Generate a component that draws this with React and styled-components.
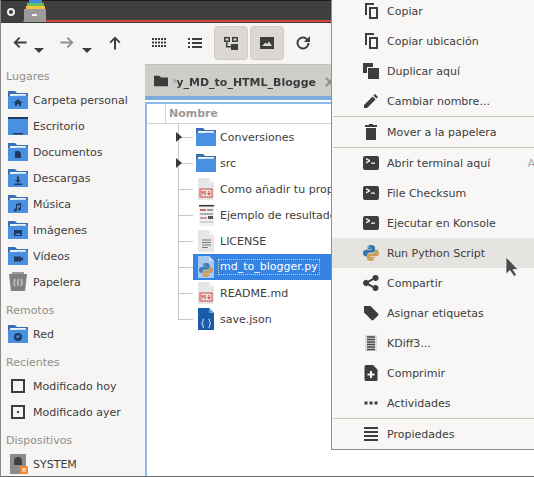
import React from "react";
import styled, { createGlobalStyle } from "styled-components";

const Global = createGlobalStyle`
  html, body { margin: 0; padding: 0; background: #fff; }
  body { font-family: "DejaVu Sans", sans-serif; font-size: 11px; color: #3d3d3d; }
`;

const Page = styled.div`
  position: relative;
  width: 534px;
  height: 477px;
  overflow: hidden;
  display: flex;
  flex-direction: column;
  background: #f6f5f3;
  box-sizing: border-box;
  border-left: 1px solid #8b8b8b;
  border-bottom: 1px solid #6b6b6b;
`;

const TitleBar = styled.div`
  height: 23px;
  flex: none;
  box-sizing: border-box;
  background: #3f3f3f;
  border-top: 1px solid #1c1c1c;
  border-bottom: 1px solid #3a3a3a;
  display: flex;
  align-items: flex-start;
  position: relative;
  padding-left: 5px;
  gap: 7px;
`;
const RedLine = styled.div`
  position: absolute;
  left: 22px;
  right: 0;
  bottom: 0;
  height: 2px;
  background: #d2453a;
`;
const AppIcon = styled.svg`
  position: relative;
  z-index: 1;
  margin-top: -1px;
`;
const Gear = styled.svg`
  margin-top: 6px;
`;

const Toolbar = styled.div`
  height: 41px;
  flex: none;
  display: flex;
  align-items: center;
  box-sizing: border-box;
  padding: 1px 0 2px;
`;
const ToolBtn = styled.div`
  width: 34px;
  height: 34px;
  margin-left: ${(p) => p.$ml || 0}px;
  flex: none;
  box-sizing: border-box;
  display: flex;
  align-items: center;
  justify-content: center;
  border-radius: 4px;
  position: relative;
  background: ${(p) => (p.$on ? "#dbd8d2" : "transparent")};
  border: 1px solid ${(p) => (p.$on ? "#cfccc6" : "transparent")};
`;
const DropTip = styled.span`
  position: absolute;
  left: ${(p) => p.$x}px;
  top: 21px;
  width: 0;
  height: 0;
  border-left: 5px solid transparent;
  border-right: 5px solid transparent;
  border-top: 5px solid #3d3d3d;
`;

const Body = styled.div`
  flex: 1;
  min-height: 0;
  display: flex;
`;
const Sidebar = styled.div`
  width: 144px;
  flex: none;
  padding-top: 1px;
  box-sizing: border-box;
`;
const SideLabel = styled.div`
  height: 22px;
  line-height: 24px;
  margin-top: ${(p) => (p.$first ? 0 : 4)}px;
  padding-left: 5px;
  color: #8f8f8d;
`;
const SideRow = styled.div`
  height: 26px;
  display: flex;
  align-items: center;
  padding-left: 7px;
  gap: 5px;
  white-space: nowrap;
  color: #3d3d3d;
`;

const Main = styled.div`
  flex: 1;
  min-width: 0;
  display: flex;
  flex-direction: column;
`;
const TabBar = styled.div`
  height: 32px;
  flex: none;
  box-sizing: border-box;
  background: #cfcdc9;
  border-top: 1px solid #c4c1bb;
  display: flex;
  align-items: center;
  padding-left: 9px;
  gap: 5px;
`;
const TabText = styled.div`
  width: 143px;
  padding-top: 3px;
  overflow: hidden;
  display: flex;
  justify-content: flex-end;
  white-space: nowrap;
  font-weight: bold;
  color: #3b3b3b;
  -webkit-mask-image: linear-gradient(90deg, transparent 0, #000 5px);
  mask-image: linear-gradient(90deg, transparent 0, #000 5px);
`;
const TabClose = styled.svg`
  margin-left: 4px;
  margin-top: 3px;
  flex: none;
`;
const ViewFrame = styled.div`
  flex: 1;
  min-height: 0;
  background: #fff;
  border-top: 4px solid #7ea9dc;
  display: flex;
  flex-direction: column;
`;
const ListFrame = styled.div`
  flex: 1;
  box-sizing: border-box;
  border-left: 2px solid #8cbbeb;
  border-top: 2px solid #8cbbeb;
  margin-top: 2px;
  background: #fff;
`;
const HeaderRow = styled.div`
  height: 20px;
  box-sizing: border-box;
  border-bottom: 1px solid #d5d3cf;
  display: flex;
  align-items: center;
`;
const HeaderCell = styled.div`
  width: 18px;
  height: 100%;
  border-right: 1px solid #d5d3cf;
`;
const HeaderName = styled.div`
  padding-left: 3px;
  font-weight: bold;
  color: #9a9a98;
`;
const TreeRow = styled.div`
  height: 26px;
  display: flex;
  padding-left: 31px;
`;
const Guide = styled.div`
  position: relative;
  width: 14px;
  flex: none;
  height: ${(p) => (p.$last ? "14px" : "100%")};
  border-left: 1px solid #c9c7c3;
  box-sizing: content-box;
  &::after {
    content: "";
    position: absolute;
    left: 0;
    right: 0;
    top: 13px;
    height: 1px;
    background: #c9c7c3;
  }
`;
const Expander = styled.span`
  position: absolute;
  z-index: 1;
  left: -3px;
  top: 8px;
  width: 0;
  height: 0;
  border-top: 5px solid transparent;
  border-bottom: 5px solid transparent;
  border-left: 6px solid #3a3a3a;
`;
const TreeItem = styled.div`
  flex: 1;
  display: flex;
  align-items: center;
  padding-left: 3px;
  gap: 4px;
  white-space: nowrap;
  overflow: hidden;
  background: ${(p) => (p.$sel ? "#3584e4" : "transparent")};
  color: ${(p) => (p.$sel ? "#fff" : "#3d3d3d")};
`;
const EditName = styled.span`
  outline: 1px dotted #d9cfa8;
  outline-offset: 0;
  padding: 0 1px;
  margin-left: -1px;
  line-height: 14px;
`;

const Menu = styled.div`
  position: absolute;
  left: 330px;
  top: -1px;
  width: 204px;
  height: 451px;
  box-sizing: border-box;
  background: #f8f7f5;
  border: 1px solid #8f8f8f;
  border-right: none;
  overflow: hidden;
`;
const MenuList = styled.div`
  margin-top: -4px;
`;
const MenuRow = styled.div`
  height: 30px;
  display: flex;
  align-items: center;
  padding-left: 1px;
  white-space: nowrap;
  position: relative;
  color: #3d3d3d;
  background: ${(p) => (p.$hover ? "#e6e4e0" : "transparent")};
`;
const MenuIcon = styled.div`
  width: 54px;
  flex: none;
  display: flex;
  justify-content: center;
  padding-left: 22px;
  box-sizing: border-box;
  align-items: center;
`;
const Shortcut = styled.span`
  position: absolute;
  right: 0;
  color: #a9a8a5;
`;
const MenuSep = styled.div`
  height: 1px;
  margin-left: 1px;
  background: #c9c6c0;
`;
const Pointer = styled.svg`
  position: absolute;
  left: 503px;
  top: 256px;
`;

const Ico = ({ d, size = 16, fill = "#3d3d3d", children }) => (
  <svg width={size} height={size} viewBox="0 0 16 16" fill={fill}>
    {d && <path d={d} />}
    {children}
  </svg>
);

const ICONS = {
  back: "M7 2 1.500 7.500 7 13l1.300-1.300L5 8.500h9.500v-2H5l3.300-3.200z",
  fwd: "M9 2l5.500 5.500L9 13l-1.300-1.300L11 8.500H1.500v-2H11L7.700 3.300z",
  up: "M8 1.500 2.500 7 3.800 8.300 7 5v9.500h2V5l3.200 3.300L13.500 7z",
  list: "M1 3h2v2H1zM5 3h10v2H5zM1 7h2v2H1zM5 7h10v2H5zM1 11h2v2H1zM5 11h10v2H5z",
  tree: "M1 2h6v5H1zm1.500 1.500V5.500h3V3.500zM9 2h6v5H9zm1.500 1.500V5.500h3V3.500zM3 7h1.500v4H8v1.500H3zM8 9h7v6H8z",
  image: "M1 2h14v12H1zM3 11h10L10 6.500 8 9 6.500 7.500z",
  reload: "M8 1.500a6.500 6.500 0 1 0 6.500 6.500h-2A4.500 4.500 0 1 1 8 3.500c1.200 0 2.300.5 3.100 1.300L8.900 7H15V1l-2.400 2.400A6.500 6.500 0 0 0 8 1.500z",
  copy: "M2 0h9v2H4v10H2zM6 4h9v12H6zm2 2v8h5V6z",
  dup: "M0 0h10v4H4v6H0zM5 5h11v11H5z",
  pen: "M12 1l3 3-1.600 1.600-3-3zM9.600 3.400l3 3L4 15H1v-3z",
  trash: "M6 0h4v1h4v2H2V1h4zM3 4h10v12H3z",
  term: "M2 1h12a2 2 0 0 1 2 2v10a2 2 0 0 1-2 2H2a2 2 0 0 1-2-2V3a2 2 0 0 1 2-2zm1 2V4.500l2.500 1.200L3 7v1.500l4-2.100v-1.400zM8 7.500v1.200h4V7.500z",
  share: "M12.500 0a3 3 0 1 1-2.200 5L6 7.400v1.200L10.300 11a3 3 0 1 1-.8 1.800L5 10.300a3 3 0 1 1 0-4.600l4.500-2.500A3 3 0 0 1 12.500 0z",
  tag: "M1 1h6.500L15 8.500a1.500 1.500 0 0 1 0 2L10.500 15a1.500 1.500 0 0 1-2 0L1 7.500z",
  compress: "M3 0h7l4.500 4.500V14.500a1.500 1.500 0 0 1-1.500 1.500H3a1.500 1.500 0 0 1-1.500-1.500V1.500A1.500 1.500 0 0 1 3 0zM7 6v2.500H4.500v2H7V13h2v-2.500h2.500v-2H9V6z",
  dots: "M1.500 6.500h3v3h-3zM6.500 6.500h3v3h-3zM11.500 6.500h3v3h-3z",
  props: "M1 1h14v2H1zM1 5h14v2H1zM1 9h14v2H1zM1 13h14v2H1z",
};

const Grid = () => (
  <Ico>
    {[2, 5, 8, 11, 14].flatMap((x) =>
      [3, 6.5, 10].map((y) => <rect key={x + "-" + y} x={x - 1} y={y} width="2" height="2" />)
    )}
  </Ico>
);

const Folder = ({ glyph, desk }) => (
  <svg width="20" height="20" viewBox="0 0 20 20">
    {desk ? (
      <>
        <rect y="1" width="20" height="18" fill="#4a90e2" />
        <rect y="1" width="20" height="2" fill="#1f3b5f" />
        <rect x="5" y="17" width="10" height="1.500" fill="#1f3b5f" />
      </>
    ) : (
      <>
        <path d="M0 1h7l2 2h11v4H0z" fill="#3b6fb3" />
        <rect x="2" y="4.500" width="16" height="2" fill="#e8eef5" />
        <path d="M0 6h8l1-.5h11V19H0z" fill="#4a90e2" />
        <rect x="2" y="4" width="16" height="1.500" fill="#eef2f6" />
      </>
    )}
    {glyph === "home" && <path d="M10 9l-4.500 4H7v3h2v-2h2v2h2v-3h1.500z" fill="#1f3b5f" />}
    {glyph === "doc" && <path d="M7 9h4l2 2v5H7z" fill="#1f3b5f" />}
    {glyph === "down" && <path d="M9 8.500h2V12h2l-3 3-3-3h2zM6 15.500h8V17H6z" fill="#1f3b5f" />}
    {glyph === "music" && <path d="M8 10l5-1v6a1.500 1.500 0 1 1-1-1.400V11l-3 .6V16a1.500 1.500 0 1 1-1-1.400z" fill="#1f3b5f" />}
    {glyph === "img" && <path d="M6 10h8v6H6zM7 15h6l-2-2-1.500 1-1-.8z" fill="#1f3b5f" fillRule="evenodd" />}
    {glyph === "video" && <path d="M6 10.500h7v5H6zM13 12l2-1v4l-2-1z" fill="#1f3b5f" />}
    {glyph === "net" && (
      <>
        <circle cx="10" cy="13" r="4" fill="#1f3b5f" />
        <path d="M8 11l2 1 1-1.500 1 2-2 1-1 1.500z" fill="#4a90e2" />
      </>
    )}
  </svg>
);

const Trash = () => (
  <svg width="20" height="20" viewBox="0 0 20 20">
    <path d="M4 0h12v2H4z" fill="#9a9a98" />
    <path d="M1 2h18l-2 17H3z" fill="#7f7f7d" />
    <path d="M7 7c-1 2-1 5 0 7M13 7c1 2 1 5 0 7M10 7v7" stroke="#b5b5b3" strokeWidth="2" fill="none" />
  </svg>
);

const RecentIcon = ({ dot }) => (
  <svg width="20" height="20" viewBox="0 0 20 20">
    <rect x="4" y="4" width="12" height="12" fill="none" stroke="#3d3d3d" strokeWidth="2" />
    {dot && <rect x="9" y="9" width="2" height="2" fill="#3d3d3d" />}
  </svg>
);

const Drive = () => (
  <svg width="20" height="20" viewBox="0 0 20 20">
    <rect x="2" y="0" width="16" height="20" fill="#8c8c8a" />
    <path d="M6 12V7a4 4 0 0 1 8 0v4H6z" fill="#3f3f3f" />
    <rect x="12" y="12" width="8" height="8" rx="1" fill="#f08a3c" />
    <path d="M14.500 14.500l3 3M17.500 14.500l-3 3" stroke="#fff" strokeWidth="1.200" />
  </svg>
);

const PythonLogo = ({ size = 16, dim }) => (
  <svg width={size} height={size} viewBox="0 0 16 16">
    <path d="M8 0C5 0 4.500 1 4.500 2.500V4H8.500v.7H3C1 4.700 0 6 0 8s1 3.500 3 3.500h1.200V9.800C4.200 8.500 5.300 7.500 6.500 7.500h3.500c1 0 2-.9 2-2V2.500C12 1 10.500 0 8 0zM6 1.300a.7.7 0 1 1 0 1.400.7.7 0 0 1 0-1.400z" fill={dim ? "#3f7db5" : "#3776ab"} />
    <path d="M8 16c3 0 3.500-1 3.500-2.500V12H7.500v-.7H13c2 0 3-1.300 3-3.300s-1-3.500-3-3.500h-1.200v1.700c0 1.300-1.100 2.300-2.300 2.300H6c-1 0-2 .9-2 2v3c0 1.500 1.500 2.500 4 2.500zm2-1.300a.7.7 0 1 1 0-1.400.7.7 0 0 1 0 1.400z" fill="#c9a15a" />
  </svg>
);

const FilePage = ({ bg = "#e6e6e4", fold = "#f4f4f2", children }) => (
  <svg width="20" height="22" viewBox="0 0 20 22">
    <path d="M2 0h11l5 5v17H2z" fill={bg} />
    <path d="M13 0l5 5h-5z" fill={fold} />
    {children}
  </svg>
);

const MdMark = () => (
  <>
    <rect x="4" y="11" width="12" height="8" fill="none" stroke="#d9423c" strokeWidth="1" />
    <path d="M6 17v-4l1.500 2L9 13v4M13 13v3M11.500 15l1.500 2 1.500-2" fill="none" stroke="#d9423c" strokeWidth="1" />
  </>
);

const FileIcon = ({ kind }) => {
  if (kind === "folder") return <Folder />;
  if (kind === "md") return <FilePage><MdMark /></FilePage>;
  if (kind === "shot")
    return (
      <svg width="20" height="22" viewBox="0 0 20 22">
        <rect x="3" y="0" width="15" height="22" fill="#f3f3f3" />
        <rect x="3" y="1" width="15" height="1.500" fill="#2b3a4a" />
        <rect x="4" y="5" width="6" height="2" fill="#c96a62" />
        <rect x="11" y="5" width="6" height="2" fill="#9a9a9a" />
        <rect x="4" y="9" width="13" height="2" fill="#b0b0b0" />
        <rect x="4" y="13" width="7" height="2" fill="#c9a0a0" />
        <rect x="12" y="12" width="5" height="3" fill="#555" />
        <rect x="4" y="17" width="13" height="2" fill="#d0d0d0" />
      </svg>
    );
  if (kind === "text")
    return (
      <FilePage>
        <path d="M6 10h9M6 12.500h9M6 15h9M6 17.500h6" stroke="#777" strokeWidth="1" />
      </FilePage>
    );
  if (kind === "py")
    return (
      <svg width="20" height="22" viewBox="0 0 20 22">
        <path d="M2 0h11l5 5v17H2z" fill="#a8c8ee" />
        <path d="M13 0l5 5h-5z" fill="#cfe0f5" />
        <g transform="translate(3 7)"><PythonLogo size={14} dim /></g>
      </svg>
    );
  return (
    <svg width="20" height="22" viewBox="0 0 20 22">
      <path d="M2 0h11l5 5v17H2z" fill="#1c5ba8" />
      <path d="M13 0l5 5h-5z" fill="#6a9fdc" />
      <path d="M8 11c-1.500 0-1 1.500-1 2.500S6.500 15 5.500 15.500c1 .5 1.500.5 1.500 1.500s-.5 2.500 1 2.500M12.500 11c1.500 0 1 1.500 1 2.500s.5 1.500 1.500 2c-1 .5-1.500.5-1.500 1.500s.5 2.500-1 2.500" fill="none" stroke="#fff" strokeWidth=".9" />
    </svg>
  );
};

const places = [
  ["Carpeta personal", <Folder glyph="home" />],
  ["Escritorio", <Folder desk />],
  ["Documentos", <Folder glyph="doc" />],
  ["Descargas", <Folder glyph="down" />],
  ["Música", <Folder glyph="music" />],
  ["Imágenes", <Folder glyph="img" />],
  ["Vídeos", <Folder glyph="video" />],
  ["Papelera", <Trash />],
];

const files = [
  { name: "Conversiones", kind: "folder", open: true },
  { name: "src", kind: "folder", open: true },
  { name: "Como añadir tu propio", kind: "md" },
  { name: "Ejemplo de resultado.html", kind: "shot" },
  { name: "LICENSE", kind: "text" },
  { name: "md_to_blogger.py", kind: "py", sel: true },
  { name: "README.md", kind: "md" },
  { name: "save.json", kind: "json", last: true },
];

const menuTop = [
  ["Copiar", "copy"],
  ["Copiar ubicación", "copy"],
  ["Duplicar aquí", "dup"],
  ["Cambiar nombre...", "pen"],
];
const menuMid = [
  ["File Checksum", "term"],
  ["Ejecutar en Konsole", "term"],
];
const menuLow = [
  ["Compartir", "share"],
  ["Asignar etiquetas", "tag"],
];

function MenuItem({ label, icon, hover, shortcut, children }) {
  return (
    <MenuRow $hover={hover}>
      <MenuIcon>{children || <Ico d={ICONS[icon]} />}</MenuIcon>
      {label}
      {shortcut && <Shortcut>{shortcut}</Shortcut>}
    </MenuRow>
  );
}

export default function App() {
  return (
    <Page>
      <Global />
      <TitleBar>
        <Gear width="10" height="10" viewBox="0 0 10 10">
          <circle cx="5" cy="5" r="3" fill="none" stroke="#eee" strokeWidth="2" />
        </Gear>
        <AppIcon width="24" height="22" viewBox="0 0 24 22">
          <rect x="6" y="0" width="13" height="3" fill="#3f8ae0" />
          <rect x="4" y="3" width="17" height="3" fill="#5fc15f" />
          <rect x="3" y="6" width="19" height="3" fill="#f5c242" />
          <rect x="1" y="9" width="22" height="13" fill="#9b9b99" />
          <rect x="9" y="14" width="5" height="2" fill="#f4f4f4" />
        </AppIcon>
        <RedLine />
      </TitleBar>
      <Toolbar>
        <ToolBtn $ml={2}><Ico d={ICONS.back} /><DropTip $x={30} /></ToolBtn>
        <ToolBtn $ml={13}><Ico d={ICONS.fwd} fill="#8f8f8d" /><DropTip $x={31} /></ToolBtn>
        <ToolBtn $ml={14}><Ico d={ICONS.up} /></ToolBtn>
        <ToolBtn $ml={10}><Grid /></ToolBtn>
        <ToolBtn $ml={2}><Ico d={ICONS.list} /></ToolBtn>
        <ToolBtn $on $ml={2}><Ico d={ICONS.tree} /></ToolBtn>
        <ToolBtn $on $ml={2}><Ico d={ICONS.image} /></ToolBtn>
        <ToolBtn $ml={2}><Ico d={ICONS.reload} /></ToolBtn>
      </Toolbar>
      <Body>
        <Sidebar>
          <SideLabel $first>Lugares</SideLabel>
          {places.map(([name, icon]) => (
            <SideRow key={name}>{icon}{name}</SideRow>
          ))}
          <SideLabel>Remotos</SideLabel>
          <SideRow><Folder glyph="net" />Red</SideRow>
          <SideLabel>Recientes</SideLabel>
          <SideRow><RecentIcon />Modificado hoy</SideRow>
          <SideRow><RecentIcon dot />Modificado ayer</SideRow>
          <SideLabel>Dispositivos</SideLabel>
          <SideRow><Drive />SYSTEM</SideRow>
        </Sidebar>
        <Main>
          <TabBar>
            <Ico size={14} d="M0 2h6l2 2h8v10H0z" fill="#3b3b3b" />
            <TabText>Py_MD_to_HTML_Blogge</TabText>
            <TabClose width="10" height="10" viewBox="0 0 10 10">
              <path d="M1 1l8 8M9 1l-8 8" stroke="#8f8d89" strokeWidth="2.200" />
            </TabClose>
          </TabBar>
          <ViewFrame>
            <ListFrame>
              <HeaderRow>
                <HeaderCell />
                <HeaderName>Nombre</HeaderName>
              </HeaderRow>
              {files.map((f) => (
                <TreeRow key={f.name}>
                  <Guide $last={f.last}>{f.open && <Expander />}</Guide>
                  <TreeItem $sel={f.sel}>
                    <FileIcon kind={f.kind} />
                    {f.sel ? <EditName>{f.name}</EditName> : f.name}
                  </TreeItem>
                </TreeRow>
              ))}
            </ListFrame>
          </ViewFrame>
        </Main>
      </Body>
      <Menu>
        <MenuList>
          {menuTop.map(([label, icon]) => <MenuItem key={label} label={label} icon={icon} />)}
          <MenuSep />
          <MenuItem label="Mover a la papelera" icon="trash" />
          <MenuSep />
          <MenuItem label="Abrir terminal aquí" icon="term" shortcut="A" />
          {menuMid.map(([label, icon]) => <MenuItem key={label} label={label} icon={icon} />)}
          <MenuItem label="Run Python Script" hover><PythonLogo /></MenuItem>
          {menuLow.map(([label, icon]) => <MenuItem key={label} label={label} icon={icon} />)}
          <MenuItem label="KDiff3...">
            <Ico>
              <rect x="2" y="0" width="12" height="16" fill="#dcdbd8" />
              <path d="M4 2h8M4 4.500h8M4 7h8M4 9.500h8M4 12h8M4 14.500h8" stroke="#444" strokeWidth="1.300" />
            </Ico>
          </MenuItem>
          <MenuItem label="Comprimir" icon="compress" />
          <MenuItem label="Actividades" icon="dots" />
          <MenuSep />
          <MenuItem label="Propiedades" icon="props" />
        </MenuList>
      </Menu>
      <Pointer width="15" height="23" viewBox="0 0 15 23">
        <path d="M2 1v17l4-3.500 4 6 2.500-1.500-3.500-5.500h5z" fill="#4a4a4a" stroke="#f0efec" strokeWidth=".8" />
      </Pointer>
    </Page>
  );
}
